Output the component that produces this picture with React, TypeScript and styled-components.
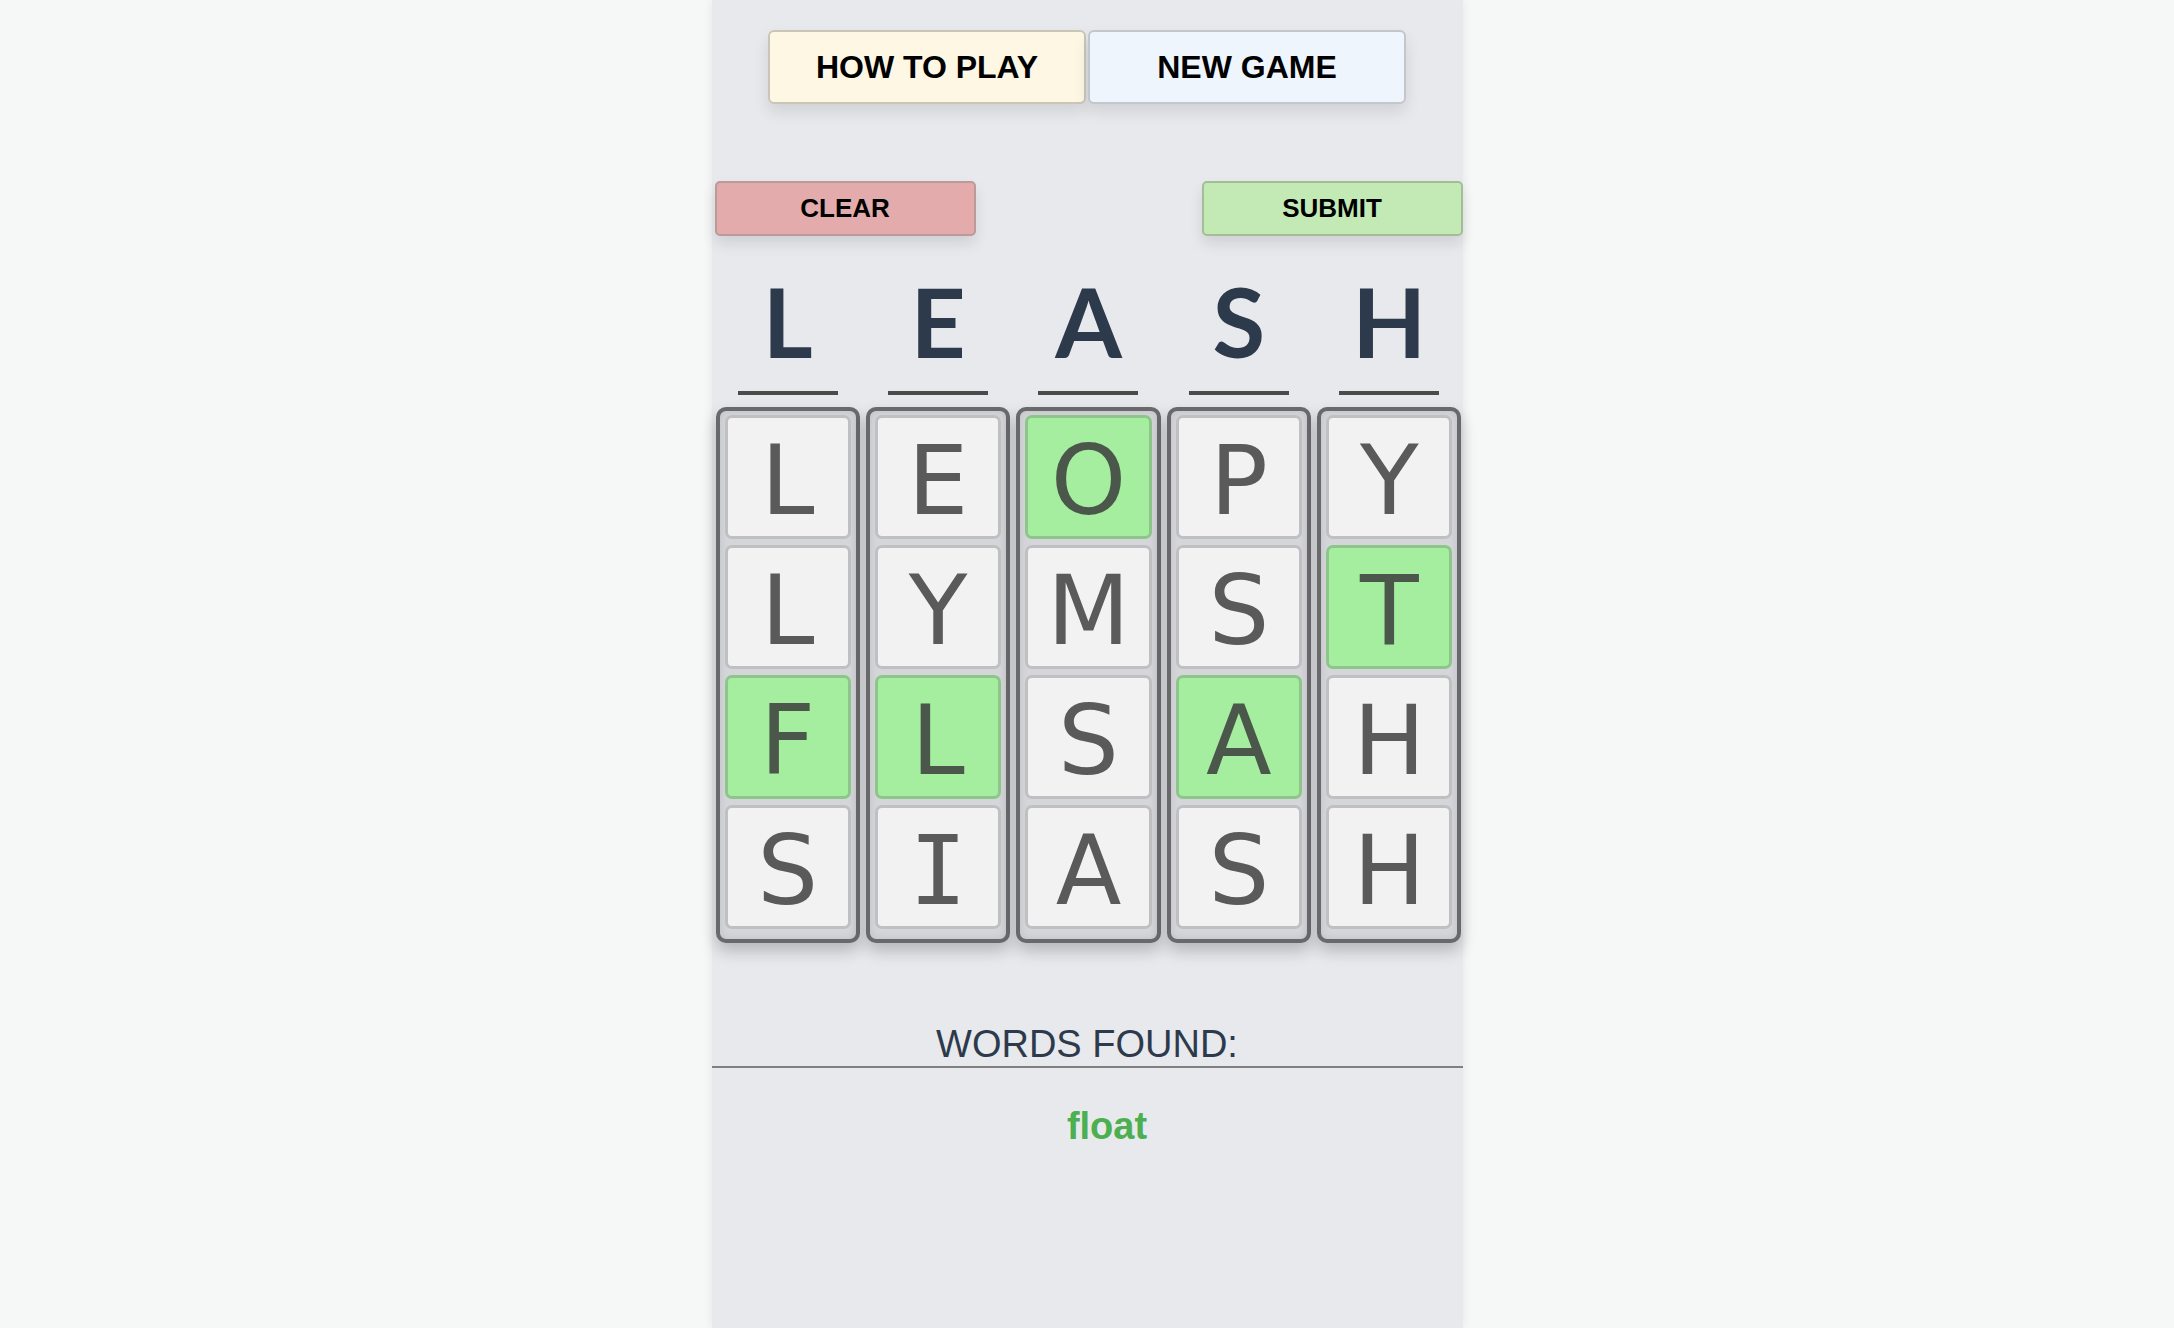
import React from "react";
import styled, { createGlobalStyle } from "styled-components";

const GlobalStyle = createGlobalStyle`
  html, body {
    margin: 0;
    padding: 0;
    background: #f6f8f7;
  }
  body {
    font-family: "Liberation Sans", Arial, sans-serif;
  }
`;

const Page = styled.main`
  width: 751px;
  min-height: 100vh;
  margin: 0 auto;
  background: #e8e9ed;
  box-shadow: 0 0 10px rgba(0, 0, 0, 0.07);
  display: flex;
  flex-direction: column;
`;

const TopBar = styled.div`
  display: flex;
  justify-content: center;
  gap: 2px;
  padding-top: 30px;
`;

const MenuButton = styled.button<{ $bg: string; $border: string }>`
  width: 318px;
  height: 74px;
  box-sizing: border-box;
  padding: 0;
  background: ${(p) => p.$bg};
  border: 2px solid ${(p) => p.$border};
  border-radius: 6px;
  font: 700 32px "Liberation Sans", Arial, sans-serif;
  color: #000;
  box-shadow: 0 8px 16px rgba(0, 0, 0, 0.1);
`;

const ActionBar = styled.div`
  display: flex;
  justify-content: space-between;
  margin-top: 77px;
  padding: 0 0 0 3px;
`;

const ActionButton = styled.button<{ $bg: string; $border: string }>`
  width: 261px;
  height: 55px;
  box-sizing: border-box;
  padding: 0;
  background: ${(p) => p.$bg};
  border: 2px solid ${(p) => p.$border};
  border-radius: 5px;
  font: 700 26px "Liberation Sans", Arial, sans-serif;
  color: #000;
  box-shadow: 0 8px 14px rgba(0, 0, 0, 0.1);
`;

const FiveGrid = styled.div`
  display: grid;
  grid-template-columns: repeat(5, 1fr);
  column-gap: 6px;
  padding: 0 1px 0 4px;
`;

const HeaderRow = styled(FiveGrid)`
  margin-top: 37px;
`;

const HeaderCell = styled.div`
  display: flex;
  flex-direction: column;
  align-items: center;
`;

const HeaderLetter = styled.span`
  font: 700 96px Lato, "Open Sans", sans-serif;
  line-height: 96px;
  color: #2d3a4c;
`;

const Underline = styled.div`
  width: 100px;
  height: 4px;
  margin-top: 22px;
  background: #4b4b4b;
`;

const Board = styled(FiveGrid)`
  margin-top: 12px;
`;

const Column = styled.div`
  display: flex;
  flex-direction: column;
  gap: 6px;
  padding: 4px 5px 10px;
  border: 4px solid #69696b;
  border-radius: 10px;
  background: #d5d6da;
  box-shadow: inset 0 0 8px rgba(0, 0, 0, 0.1), 0 8px 16px rgba(0, 0, 0, 0.22);
`;

const Tile = styled.div<{ $hit: boolean; $serif: boolean }>`
  height: 124px;
  box-sizing: border-box;
  display: flex;
  align-items: center;
  justify-content: center;
  padding-top: 7px;
  border: 3px solid ${(p) => (p.$hit ? "#8ec58a" : "#c0c0c2")};
  border-radius: 7px;
  background: ${(p) => (p.$hit ? "#a5eea0" : "#f2f2f2")};
  color: ${(p) => (p.$hit ? "#4a574a" : "#5a5a5a")};
  font-size: 96px;
  font-weight: 400;
  font-family: ${(p) =>
    p.$serif
      ? '"DejaVu Sans Mono", "Liberation Mono", monospace'
      : 'Verdana, "DejaVu Sans", sans-serif'};
  line-height: 1;
`;

const WordsHeading = styled.h2`
  margin: 79px 0 0;
  font: 400 38px "Liberation Sans", Arial, sans-serif;
  line-height: 44px;
  color: #2d3a4c;
  text-align: center;
  border-bottom: 2px solid #808080;
`;

const WordList = styled.ul`
  margin: 36px 0 0;
  padding: 0 0 0 40px;
  list-style: none;
  text-align: center;
`;

const Word = styled.li`
  font: 700 38px "Liberation Sans", Arial, sans-serif;
  line-height: 44px;
  color: #4caf50;
`;

const target = ["L", "E", "A", "S", "H"];

const columns: { ch: string; hit?: boolean }[][] = [
  [{ ch: "L" }, { ch: "L" }, { ch: "F", hit: true }, { ch: "S" }],
  [{ ch: "E" }, { ch: "Y" }, { ch: "L", hit: true }, { ch: "I" }],
  [{ ch: "O", hit: true }, { ch: "M" }, { ch: "S" }, { ch: "A" }],
  [{ ch: "P" }, { ch: "S" }, { ch: "A", hit: true }, { ch: "S" }],
  [{ ch: "Y" }, { ch: "T", hit: true }, { ch: "H" }, { ch: "H" }],
];

export default function App() {
  return (
    <>
      <GlobalStyle />
      <Page>
        <TopBar>
          <MenuButton $bg="#fef7e3" $border="#c9c6b8">HOW TO PLAY</MenuButton>
          <MenuButton $bg="#eff5fd" $border="#c3c6cc">NEW GAME</MenuButton>
        </TopBar>
        <ActionBar>
          <ActionButton $bg="#e3abab" $border="#bc9a9a">CLEAR</ActionButton>
          <ActionButton $bg="#c3eab5" $border="#a3bd99">SUBMIT</ActionButton>
        </ActionBar>
        <HeaderRow>
          {target.map((c, i) => (
            <HeaderCell key={i}>
              <HeaderLetter>{c}</HeaderLetter>
              <Underline />
            </HeaderCell>
          ))}
        </HeaderRow>
        <Board>
          {columns.map((col, i) => (
            <Column key={i}>
              {col.map((t, j) => (
                <Tile key={j} $hit={!!t.hit} $serif={t.ch === "I"}>
                  {t.ch}
                </Tile>
              ))}
            </Column>
          ))}
        </Board>
        <WordsHeading>WORDS FOUND:</WordsHeading>
        <WordList>
          <Word>float</Word>
        </WordList>
      </Page>
    </>
  );
}
